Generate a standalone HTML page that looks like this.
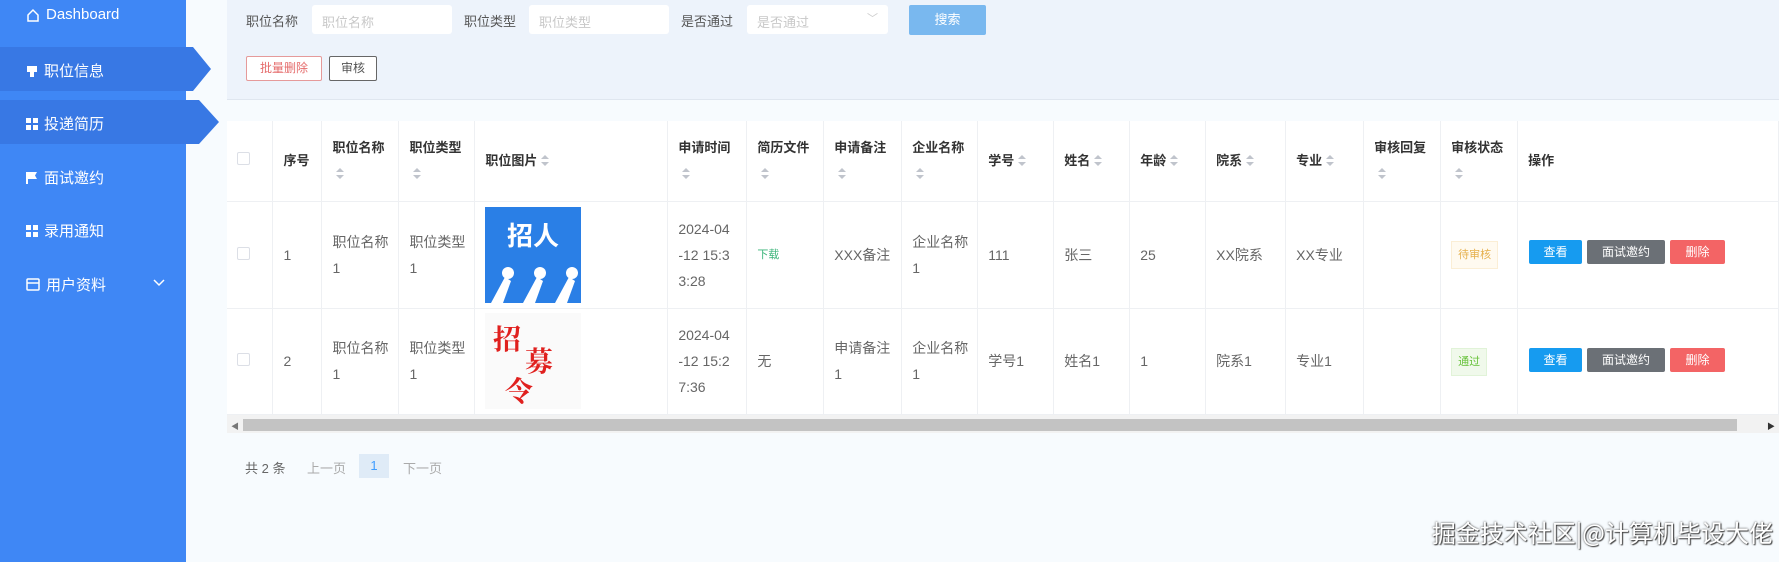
<!DOCTYPE html>
<html><head><meta charset="utf-8"><style>
*{box-sizing:border-box;margin:0;padding:0}
body{width:1779px;height:562px;overflow:hidden;background:#f7fbfe;font-family:"Liberation Sans","Noto Sans CJK SC",sans-serif;position:relative;color:#606266}
.side{position:absolute;left:0;top:0;width:186px;height:562px;background:#3f87f5}
.band{position:absolute;left:0;height:44px;background:#3878e4}
.mi{position:absolute;left:26px;color:#fff;font-size:15px;display:flex;align-items:center;gap:6px}
.abs{position:absolute}
.panel{position:absolute;left:227px;top:0;width:1552px;height:100px;background:#edf3fb;border-bottom:1px solid #dfe6ef}
.lab{position:absolute;top:11px;font-size:13px;color:#555}
.inp{position:absolute;top:5px;height:29px;background:#fff;border-radius:3px;font-size:13px;color:#c8c8c8;padding:7px 10px}
table{position:absolute;left:227px;top:121px;border-collapse:collapse;background:#fff;table-layout:fixed;font-size:14px}
td,th{border-right:1px solid #eef0f3;border-bottom:1px solid #eef0f3;padding:0 2px 0 10px;text-align:left;vertical-align:middle;line-height:26px;color:#666;font-weight:normal;white-space:nowrap;overflow:hidden}
th{color:#333;font-weight:bold;font-size:13px;height:80px}
.s{display:inline-block;width:8px;height:12px;vertical-align:middle;position:relative;margin-left:4px}
.s:before{content:"";position:absolute;left:0;top:0;border:4px solid transparent;border-bottom:4px solid #c0c4cc;border-top:0}
.s:after{content:"";position:absolute;left:0;top:7px;border:4px solid transparent;border-top:4px solid #c0c4cc;border-bottom:0}
.cb{width:13px;height:13px;border:1px solid #dcdfe6;border-radius:2px;display:inline-block}
.btn{position:absolute;height:24px;color:#fff;font-size:12px;text-align:center;line-height:24px;border-radius:2px}
</style></head><body>
<div class="side">
  <div class="band" style="top:47px;width:186px"></div>
  <svg class="abs" style="left:185px;top:47px" width="27" height="44"><polygon points="0,0 8,0 26,22 8,44 0,44" fill="#3878e4"/></svg>
  <div class="band" style="top:100px;width:186px"></div>
  <svg class="abs" style="left:185px;top:100px" width="35" height="44"><polygon points="0,0 14,0 34,22 14,44 0,44" fill="#3878e4"/></svg>
  <div class="mi" style="top:6px"><svg width="14" height="14"><path d="M2 7 L7 2 L12 7 V13 H2Z" fill="none" stroke="#fff" stroke-width="1.5"/></svg>Dashboard</div>
  <div class="mi" style="top:60px"><svg width="12" height="14"><rect x="1" y="2" width="10" height="6" fill="#fff"/><rect x="4" y="8" width="4" height="5" fill="#fff"/></svg>职位信息</div>
  <div class="mi" style="top:113px"><svg width="12" height="12"><rect x="0" y="0" width="5" height="5" fill="#fff"/><rect x="7" y="0" width="5" height="5" fill="#fff"/><rect x="0" y="7" width="5" height="5" fill="#fff"/><rect x="7" y="7" width="5" height="5" fill="#fff"/></svg>投递简历</div>
  <div class="mi" style="top:167px"><svg width="12" height="14"><path d="M1 1 V13" stroke="#fff" stroke-width="2"/><path d="M2 1 H11 L9 4.5 L11 8 H2Z" fill="#fff"/></svg>面试邀约</div>
  <div class="mi" style="top:220px"><svg width="12" height="12"><rect x="0" y="0" width="5" height="5" fill="#fff"/><rect x="7" y="0" width="5" height="5" fill="#fff"/><rect x="0" y="7" width="5" height="5" fill="#fff"/><rect x="7" y="7" width="5" height="5" fill="#fff"/></svg>录用通知</div>
  <div class="mi" style="top:274px"><svg width="14" height="13"><rect x="1" y="1" width="12" height="11" rx="1" fill="none" stroke="#fff" stroke-width="1.5"/><path d="M1 5 H13" stroke="#fff" stroke-width="1.5"/></svg>用户资料</div>
  <svg class="abs" style="left:152px;top:278px" width="14" height="10"><path d="M2 2 L7 7 L12 2" fill="none" stroke="#fff" stroke-width="1.5"/></svg>
</div>
<div class="panel">
  <div class="lab" style="left:19px">职位名称</div>
  <div class="inp" style="left:85px;width:140px">职位名称</div>
  <div class="lab" style="left:237px">职位类型</div>
  <div class="inp" style="left:302px;width:140px">职位类型</div>
  <div class="lab" style="left:454px">是否通过</div>
  <div class="inp" style="left:520px;width:141px">是否通过<span style="position:absolute;right:10px;top:5px;color:#ccc;font-size:11px">﹀</span></div>
  <div class="abs" style="left:682px;top:5px;width:77px;height:30px;background:#79b8ef;color:#fff;font-size:13px;text-align:center;line-height:30px;border-radius:2px">搜索</div>
  <div class="abs" style="left:19px;top:56px;width:76px;height:25px;border:1px solid #e59a9a;background:#fff;color:#e56c6c;font-size:12px;text-align:center;line-height:23px;border-radius:2px">批量删除</div>
  <div class="abs" style="left:102px;top:56px;width:48px;height:25px;border:1px solid #666;background:#fff;color:#555;font-size:12px;text-align:center;line-height:23px;border-radius:2px">审核</div>
</div>
<table>
<colgroup><col style="width:46px"><col style="width:49px"><col style="width:77px"><col style="width:76px"><col style="width:193px"><col style="width:79px"><col style="width:77px"><col style="width:78px"><col style="width:76px"><col style="width:76px"><col style="width:76px"><col style="width:76px"><col style="width:80px"><col style="width:78px"><col style="width:77px"><col style="width:77px"><col style="width:261px"></colgroup>
<tr style="height:80px"><th><span class="cb"></span></th><th>序号</th><th>职位名称<br><span class="s"></span></th><th>职位类型<br><span class="s"></span></th><th>职位图片<span class="s"></span></th><th>申请时间<br><span class="s"></span></th><th>简历文件<br><span class="s"></span></th><th>申请备注<br><span class="s"></span></th><th>企业名称<br><span class="s"></span></th><th>学号<span class="s"></span></th><th>姓名<span class="s"></span></th><th>年龄<span class="s"></span></th><th>院系<span class="s"></span></th><th>专业<span class="s"></span></th><th>审核回复<br><span class="s"></span></th><th>审核状态<br><span class="s"></span></th><th>操作</th></tr>
<tr style="height:107px"><td><span class="cb"></span></td><td>1</td><td>职位名称<br>1</td><td>职位类型<br>1</td><td>
<svg width="96" height="96" style="display:block"><rect width="96" height="96" fill="#2a7fe6"/><text x="48" y="38" fill="#fff" font-size="26" font-weight="bold" text-anchor="middle" font-family="Noto Sans CJK SC">招人</text><g fill="#fff"><path d="M6 96 L20 70 L26 74 L18 96Z"/><path d="M38 96 L52 70 L58 74 L50 96Z"/><path d="M70 96 L84 70 L90 74 L82 96Z"/><circle cx="23" cy="66" r="6"/><circle cx="55" cy="66" r="6"/><circle cx="87" cy="66" r="6"/></g></svg></td><td>2024-04<br>-12 15:3<br>3:28</td><td style="color:#3bb47a;font-size:11px">下载</td><td>XXX备注</td><td>企业名称<br>1</td><td>111</td><td>张三</td><td>25</td><td>XX院系</td><td>XX专业</td><td></td><td><span style="display:inline-block;padding:0 6px;line-height:26px;font-size:11px;color:#e6b04d;background:#fffaf0;border:1px solid #fbeed5">待审核</span></td><td></td></tr>
<tr style="height:106px"><td><span class="cb"></span></td><td>2</td><td>职位名称<br>1</td><td>职位类型<br>1</td><td>
<svg width="96" height="96" style="display:block"><rect width="96" height="96" fill="#fafafa"/><text x="8" y="36" fill="#e0201e" font-size="28" font-weight="bold" font-family="Noto Serif CJK SC">招</text><text x="40" y="58" fill="#e0201e" font-size="28" font-weight="bold" font-family="Noto Serif CJK SC">募</text><text x="20" y="88" fill="#e0201e" font-size="28" font-weight="bold" font-family="Noto Serif CJK SC">令</text></svg></td><td>2024-04<br>-12 15:2<br>7:36</td><td>无</td><td>申请备注<br>1</td><td>企业名称<br>1</td><td>学号1</td><td>姓名1</td><td>1</td><td>院系1</td><td>专业1</td><td></td><td><span style="display:inline-block;padding:0 6px;line-height:26px;font-size:11px;color:#67c23a;background:#f0f9eb;border:1px solid #e1f3d8">通过</span></td><td></td></tr>
</table>
<div class="btn" style="left:1529px;top:240px;width:53px;background:#169bf0">查看</div>
<div class="btn" style="left:1587px;top:240px;width:78px;background:#6b7076">面试邀约</div>
<div class="btn" style="left:1670px;top:240px;width:55px;background:#f36465">删除</div>
<div class="btn" style="left:1529px;top:348px;width:53px;background:#169bf0">查看</div>
<div class="btn" style="left:1587px;top:348px;width:78px;background:#6b7076">面试邀约</div>
<div class="btn" style="left:1670px;top:348px;width:55px;background:#f36465">删除</div>
<div class="abs" style="left:227px;top:415px;width:1552px;height:18px;background:#f2f2f2"></div>
<div class="abs" style="left:243px;top:419px;width:1494px;height:12px;background:#c3c3c3"></div>
<div class="abs" style="left:231px;top:421px;font-size:8px;color:#777">◀</div>
<div class="abs" style="left:1767px;top:421px;font-size:8px;color:#333">▶</div>
<div class="abs" style="left:245px;top:458px;font-size:13px;color:#666">共 2 条</div>
<div class="abs" style="left:307px;top:458px;font-size:13px;color:#aaa">上一页</div>
<div class="abs" style="left:359px;top:454px;width:30px;height:24px;background:#dfebf7;color:#409eff;font-size:13px;text-align:center;line-height:24px">1</div>
<div class="abs" style="left:403px;top:458px;font-size:13px;color:#aaa">下一页</div>
<div class="abs" style="right:6px;top:514px;font-size:24px;color:#fff;text-shadow:0 0 2px #444,1px 1px 1px #444;white-space:nowrap;font-family:'Noto Sans CJK SC',sans-serif">掘金技术社区|@计算机毕设大佬</div>
</body></html>
